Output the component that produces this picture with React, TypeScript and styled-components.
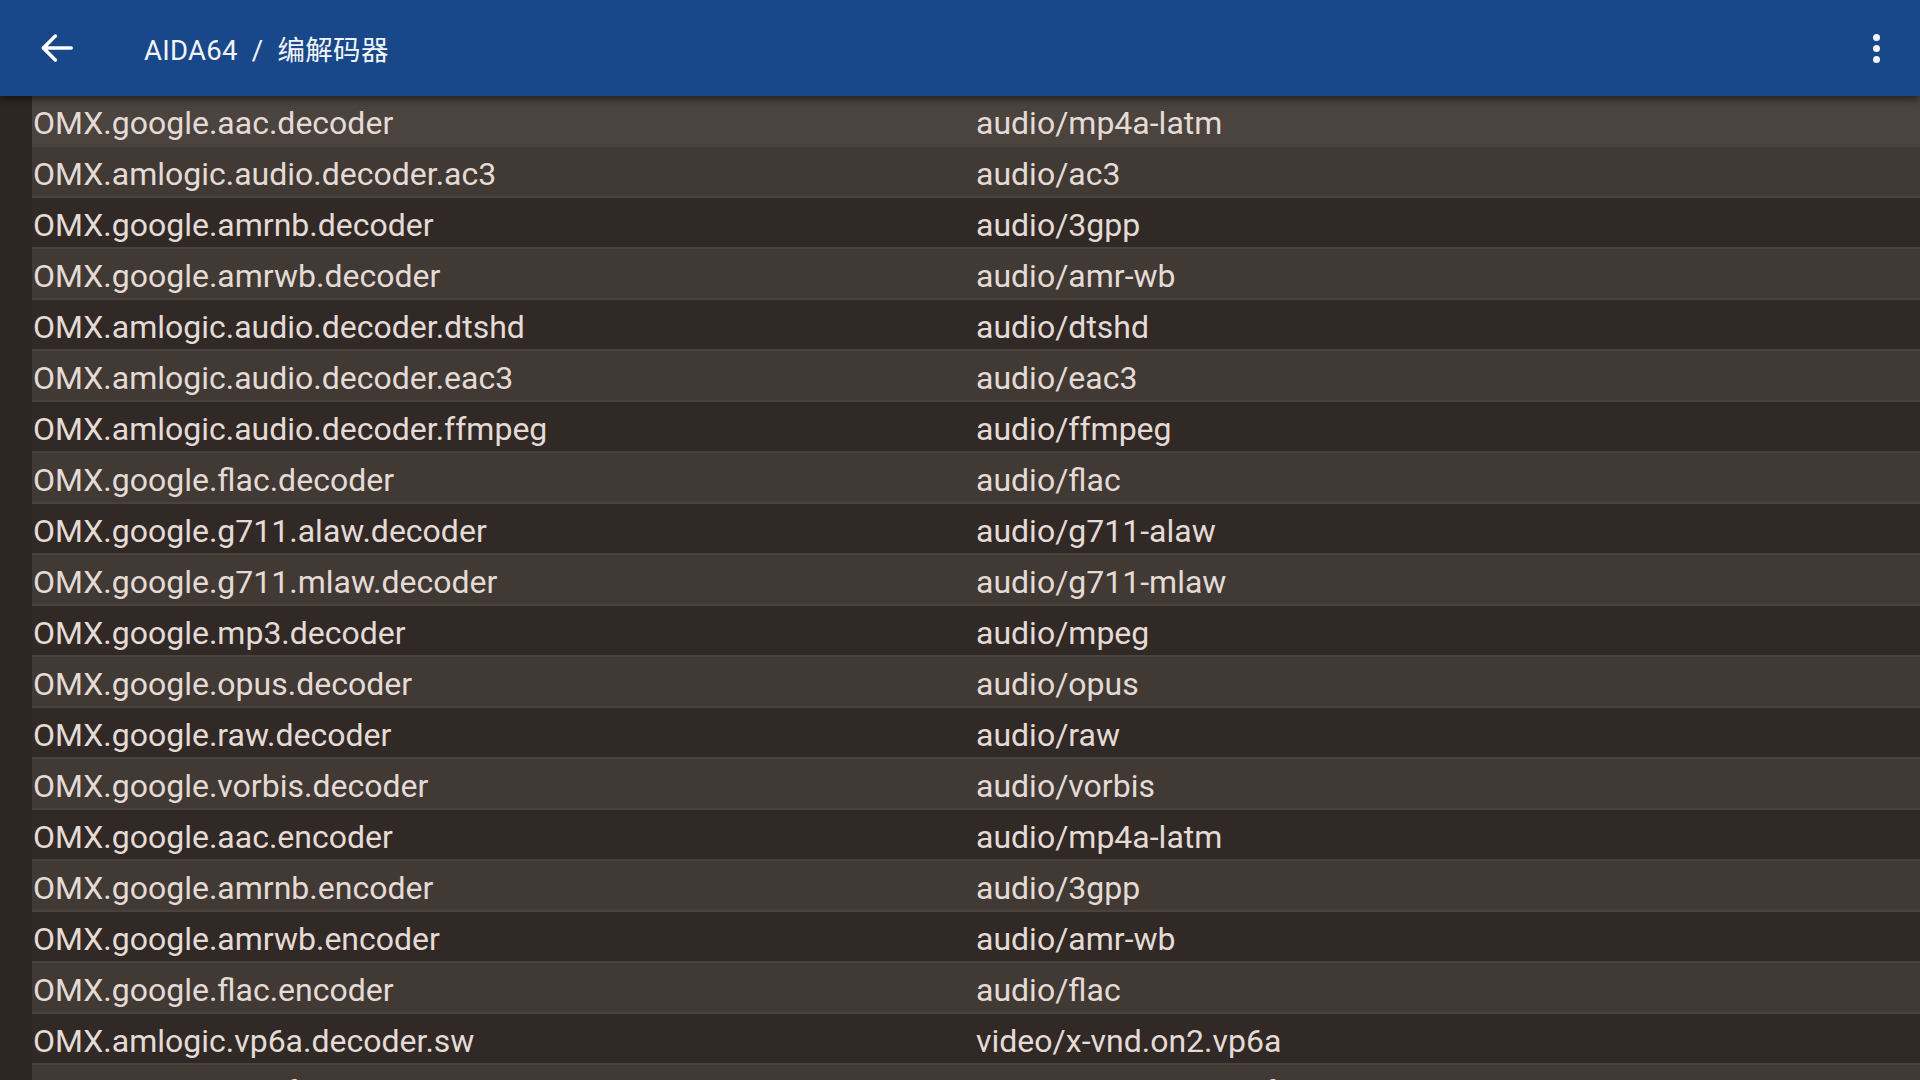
import React from "react";
import styled, { createGlobalStyle } from "styled-components";

const GlobalStyle = createGlobalStyle`
  html, body {
    margin: 0;
    padding: 0;
    background: #2e2622;
    overflow: hidden;
  }
  * {
    box-sizing: border-box;
  }
`;

const codecs = [
  ["OMX.google.aac.decoder", "audio/mp4a-latm"],
  ["OMX.amlogic.audio.decoder.ac3", "audio/ac3"],
  ["OMX.google.amrnb.decoder", "audio/3gpp"],
  ["OMX.google.amrwb.decoder", "audio/amr-wb"],
  ["OMX.amlogic.audio.decoder.dtshd", "audio/dtshd"],
  ["OMX.amlogic.audio.decoder.eac3", "audio/eac3"],
  ["OMX.amlogic.audio.decoder.ffmpeg", "audio/ffmpeg"],
  ["OMX.google.flac.decoder", "audio/flac"],
  ["OMX.google.g711.alaw.decoder", "audio/g711-alaw"],
  ["OMX.google.g711.mlaw.decoder", "audio/g711-mlaw"],
  ["OMX.google.mp3.decoder", "audio/mpeg"],
  ["OMX.google.opus.decoder", "audio/opus"],
  ["OMX.google.raw.decoder", "audio/raw"],
  ["OMX.google.vorbis.decoder", "audio/vorbis"],
  ["OMX.google.aac.encoder", "audio/mp4a-latm"],
  ["OMX.google.amrnb.encoder", "audio/3gpp"],
  ["OMX.google.amrwb.encoder", "audio/amr-wb"],
  ["OMX.google.flac.encoder", "audio/flac"],
  ["OMX.amlogic.vp6a.decoder.sw", "video/x-vnd.on2.vp6a"],
  ["OMX.amlogic.vp6f.decoder.sw", "video/x-vnd.on2.vp6f"],
];

const App = () => {
  return (
    <Page>
      <GlobalStyle />
      <Header>
        <IconButton>
          <svg width="40" height="40" viewBox="0 0 24 24" fill="none">
            <path
              d="M20.5 12H4M11 4.8L3.8 12l7.2 7.2"
              stroke="#ffffff"
              strokeWidth="2.1"
              strokeLinecap="round"
              strokeLinejoin="round"
            />
          </svg>
        </IconButton>
        <Title>
          AIDA64<Slash>/</Slash>编解码器
        </Title>
        <Menu>
          <Dot />
          <Dot />
          <Dot />
        </Menu>
      </Header>
      <List>
        {codecs.map((el, i) => (
          <Row key={i} tone={i === 0 ? "active" : i % 2 === 1 ? "mid" : "dark"}>
            <Name>{el[0]}</Name>
            <Mime>{el[1]}</Mime>
          </Row>
        ))}
      </List>
    </Page>
  );
};

export default App;

const Page = styled.div`
  width: 1920px;
  height: 1080px;
  overflow: hidden;
  display: flex;
  flex-direction: column;
  background: #2e2622;
  font-family: Roboto, "Noto Sans CJK SC", sans-serif;
`;

const Header = styled.div`
  height: 96px;
  flex-shrink: 0;
  background: #19488a;
  display: flex;
  align-items: center;
  position: relative;
  z-index: 2;
  box-shadow: 0 3px 8px rgba(0, 0, 0, 0.55);
`;

const IconButton = styled.div`
  width: 40px;
  height: 40px;
  margin-left: 37px;
  display: flex;
  align-items: center;
  justify-content: center;
`;

const Title = styled.div`
  margin-left: 67px;
  color: #f2f4f8;
  font-size: 27.5px;
  font-weight: 400;
  letter-spacing: 0.3px;
`;

const Slash = styled.span`
  margin: 0 14px;
`;

const Menu = styled.div`
  margin-left: auto;
  margin-right: 40px;
  display: flex;
  flex-direction: column;
  gap: 4px;
`;

const Dot = styled.div`
  width: 7px;
  height: 7px;
  border-radius: 50%;
  background: #f4f6fa;
`;

const List = styled.div`
  margin-left: 32px;
  display: flex;
  flex-direction: column;
`;

const Row = styled.div<{ tone: "active" | "mid" | "dark" }>`
  height: 51px;
  flex-shrink: 0;
  display: flex;
  align-items: center;
  padding-top: 4px;
  border-bottom: 2px solid #4a423d;
  background: ${(p) =>
    p.tone === "active" ? "#4b433e" : p.tone === "mid" ? "#413934" : "#312925"};
  color: #e4dbd6;
  font-size: 32px;
`;

const Name = styled.div`
  width: 944px;
  padding-left: 1px;
  white-space: nowrap;
`;

const Mime = styled.div`
  white-space: nowrap;
`;
